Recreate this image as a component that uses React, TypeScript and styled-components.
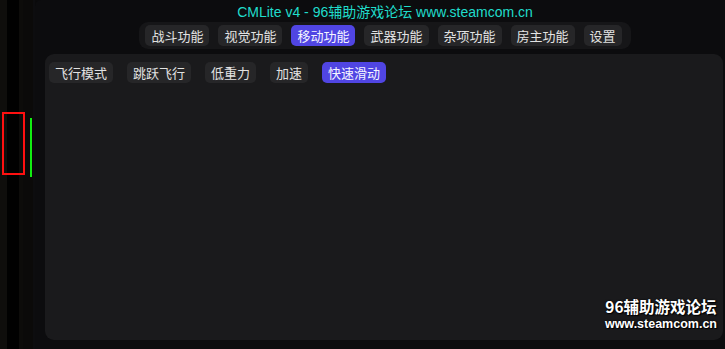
import React, { useState } from "react";
import styled, { createGlobalStyle } from "styled-components";

const GlobalStyle = createGlobalStyle`
  html, body {
    margin: 0;
    padding: 0;
    background: #0a0a0b;
    overflow: hidden;
  }
  * {
    box-sizing: border-box;
  }
`;

const mainTabs = ["战斗功能", "视觉功能", "移动功能", "武器功能", "杂项功能", "房主功能", "设置"];
const subTabs = ["飞行模式", "跳跃飞行", "低重力", "加速", "快速滑动"];

const stripes = [
  { w: 7, c: "#0f0e0c" },
  { w: 12, c: "#010101" },
  { w: 4, c: "#0d0c0a" },
  { w: 10, c: "#0b0a09" },
  { w: 2, c: "#0d0d0f" },
];

const Screen = styled.div`
  position: relative;
  display: flex;
  width: 725px;
  height: 349px;
  font-family: "Noto Sans CJK SC", "Liberation Sans", sans-serif;
`;

const Strip = styled.div`
  position: relative;
  display: flex;
  width: 35px;
  flex-shrink: 0;
`;

const Stripe = styled.div<{ $w: number; $c: string }>`
  width: ${(p) => p.$w}px;
  background: ${(p) => p.$c};
`;

const RedMarker = styled.div`
  position: absolute;
  left: 2px;
  top: 112px;
  width: 23px;
  height: 63px;
  border: 2px solid #ff1010;
`;

const GreenMarker = styled.div`
  position: absolute;
  left: 30px;
  top: 118px;
  width: 2px;
  height: 59px;
  background: #12ee12;
`;

const Window = styled.div`
  flex: 1;
  display: flex;
  flex-direction: column;
  align-items: center;
  padding: 0 0 9px 10px;
  background: #0c0c0e;
  border-top-left-radius: 6px;
`;

const Title = styled.div`
  height: 22px;
  line-height: 24px;
  font-family: "Liberation Sans", "Noto Sans CJK SC", sans-serif;
  font-size: 14px;
  color: #20dccb;
  white-space: nowrap;
`;

const TabBar = styled.div`
  display: flex;
  gap: 9px;
  height: 27px;
  padding: 3px 9px 3px 6px;
  background: #161618;
  border-radius: 9px;
`;

const Tab = styled.button<{ $active?: boolean }>`
  height: 21px;
  padding: 0 6px;
  border: none;
  border-radius: 5px;
  background: ${(p) => (p.$active ? "#5045e3" : "#262628")};
  color: ${(p) => (p.$active ? "#f4f4ff" : "#e2e2e2")};
  font-family: "Noto Sans CJK SC", sans-serif;
  font-size: 13px;
  line-height: 21px;
  cursor: pointer;
  white-space: nowrap;
`;

const Panel = styled.div`
  align-self: stretch;
  flex: 1;
  margin: 5px 2px 0 0;
  padding: 8px 4px;
  background: #1a1a1c;
  border-radius: 9px;
`;

const SubRow = styled.div`
  display: flex;
  gap: 14px;
`;

const Watermark = styled.div`
  position: absolute;
  right: 8px;
  bottom: 16px;
  display: flex;
  flex-direction: column;
  align-items: center;
  color: #ffffff;
  font-weight: bold;
  text-shadow: 0 0 2px #000, 1px 1px 1px #000;
`;

const MarkTitle = styled.div`
  font-family: "Noto Sans CJK SC", sans-serif;
  font-size: 15.5px;
  line-height: 19px;
`;

const MarkUrl = styled.div`
  font-family: "Liberation Sans", sans-serif;
  font-size: 12.5px;
  line-height: 17px;
`;

export default function App() {
  const [tab, setTab] = useState("移动功能");
  const [sub, setSub] = useState("快速滑动");

  return (
    <>
      <GlobalStyle />
      <Screen>
        <Strip>
          {stripes.map((s, i) => (
            <Stripe key={i} $w={s.w} $c={s.c} />
          ))}
          <RedMarker />
          <GreenMarker />
        </Strip>
        <Window>
          <Title>CMLite v4 - 96辅助游戏论坛 www.steamcom.cn</Title>
          <TabBar>
            {mainTabs.map((t) => (
              <Tab key={t} $active={t === tab} onClick={() => setTab(t)}>
                {t}
              </Tab>
            ))}
          </TabBar>
          <Panel>
            <SubRow>
              {subTabs.map((t) => (
                <Tab key={t} $active={t === sub} onClick={() => setSub(t)}>
                  {t}
                </Tab>
              ))}
            </SubRow>
          </Panel>
        </Window>
        <Watermark>
          <MarkTitle>96辅助游戏论坛</MarkTitle>
          <MarkUrl>www.steamcom.cn</MarkUrl>
        </Watermark>
      </Screen>
    </>
  );
}
